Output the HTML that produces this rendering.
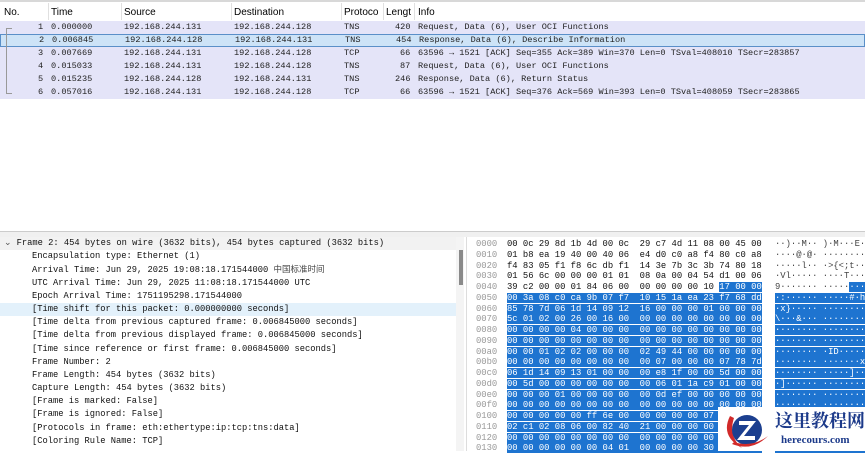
<!DOCTYPE html>
<html><head><meta charset="utf-8"><style>
body{margin:0;width:865px;height:451px;overflow:hidden;background:#fff;position:relative;font-family:"Liberation Mono",monospace;}
.a{position:absolute;white-space:pre;}
.h{font-family:"Liberation Sans",sans-serif;font-size:10px;color:#000;top:7px;}
.row{position:absolute;left:0;width:865px;height:13px;background:#e4e4f8;font-size:8.6px;line-height:13px;color:#222;}
.row span{position:absolute;white-space:pre;}
.det{position:absolute;left:0;top:237px;width:456px;font-size:8.75px;line-height:13.2px;color:#111;}
.det div{white-space:pre;padding-left:32px;height:13.2px;}
pre{margin:0;}
.hex{position:absolute;top:239px;font-size:8.85px;line-height:10.75px;color:#111;}
.b{background:#1e74d0;color:#fff;}
</style></head><body>
<div class="a" style="left:0;top:0;width:865px;height:2px;background:#d8d8d8"></div>
<div class="a h" style="left:4px">No.</div>
<div class="a h" style="left:51px">Time</div>
<div class="a h" style="left:124px">Source</div>
<div class="a h" style="left:234px">Destination</div>
<div class="a h" style="left:344px">Protoco</div>
<div class="a h" style="left:386px">Lengt</div>
<div class="a h" style="left:418px">Info</div>
<div class="a" style="left:48px;top:3px;width:1px;height:17px;background:#e0e0e0"></div>
<div class="a" style="left:121px;top:3px;width:1px;height:17px;background:#e0e0e0"></div>
<div class="a" style="left:231px;top:3px;width:1px;height:17px;background:#e0e0e0"></div>
<div class="a" style="left:341px;top:3px;width:1px;height:17px;background:#e0e0e0"></div>
<div class="a" style="left:383px;top:3px;width:1px;height:17px;background:#e0e0e0"></div>
<div class="a" style="left:414px;top:3px;width:1px;height:17px;background:#e0e0e0"></div>

<div class="row" style="top:21px"><span style="left:38px">1</span><span style="left:51px">0.000000</span><span style="left:124px">192.168.244.131</span><span style="left:234px">192.168.244.128</span><span style="left:344px">TNS</span><span style="left:395px">420</span><span style="left:418px">Request, Data (6), User OCI Functions</span></div>
<div class="row" style="top:34px;background:#cde3f7;border:1px solid #5a8fc8;box-sizing:border-box;line-height:11px"><span style="left:38px">2</span><span style="left:51px">0.006845</span><span style="left:124px">192.168.244.128</span><span style="left:234px">192.168.244.131</span><span style="left:344px">TNS</span><span style="left:395px">454</span><span style="left:418px">Response, Data (6), Describe Information</span></div>
<div class="row" style="top:47px"><span style="left:38px">3</span><span style="left:51px">0.007669</span><span style="left:124px">192.168.244.131</span><span style="left:234px">192.168.244.128</span><span style="left:344px">TCP</span><span style="left:400px">66</span><span style="left:418px">63596 → 1521 [ACK] Seq=355 Ack=389 Win=370 Len=0 TSval=408010 TSecr=283857</span></div>
<div class="row" style="top:60px"><span style="left:38px">4</span><span style="left:51px">0.015033</span><span style="left:124px">192.168.244.131</span><span style="left:234px">192.168.244.128</span><span style="left:344px">TNS</span><span style="left:400px">87</span><span style="left:418px">Request, Data (6), User OCI Functions</span></div>
<div class="row" style="top:73px"><span style="left:38px">5</span><span style="left:51px">0.015235</span><span style="left:124px">192.168.244.128</span><span style="left:234px">192.168.244.131</span><span style="left:344px">TNS</span><span style="left:395px">246</span><span style="left:418px">Response, Data (6), Return Status</span></div>
<div class="row" style="top:86px"><span style="left:38px">6</span><span style="left:51px">0.057016</span><span style="left:124px">192.168.244.131</span><span style="left:234px">192.168.244.128</span><span style="left:344px">TCP</span><span style="left:400px">66</span><span style="left:418px">63596 → 1521 [ACK] Seq=376 Ack=569 Win=393 Len=0 TSval=408059 TSecr=283865</span></div>
<div class="a" style="left:6px;top:28px;width:1px;height:66px;background:#999"></div>
<div class="a" style="left:6px;top:28px;width:6px;height:1px;background:#999"></div>
<div class="a" style="left:6px;top:93px;width:6px;height:1px;background:#999"></div>

<div class="a" style="left:0;top:231px;width:865px;height:5px;background:#f0f0f0;border-top:1px solid #ccc"></div>

<div class="det">
<div style="padding-left:4px;background:#f2f2f2"><span style="color:#555">⌄ </span>Frame 2: 454 bytes on wire (3632 bits), 454 bytes captured (3632 bits)</div>
<div>Encapsulation type: Ethernet (1)</div>
<div>Arrival Time: Jun 29, 2025 19:08:18.171544000 <span style="font-family:'Noto Sans CJK SC',sans-serif;font-size:8.5px;color:#444">中国标准时间</span></div>
<div>UTC Arrival Time: Jun 29, 2025 11:08:18.171544000 UTC</div>
<div>Epoch Arrival Time: 1751195298.171544000</div>
<div style="background:#e3f1fb">[Time shift for this packet: 0.000000000 seconds]</div>
<div>[Time delta from previous captured frame: 0.006845000 seconds]</div>
<div>[Time delta from previous displayed frame: 0.006845000 seconds]</div>
<div>[Time since reference or first frame: 0.006845000 seconds]</div>
<div>Frame Number: 2</div>
<div>Frame Length: 454 bytes (3632 bits)</div>
<div>Capture Length: 454 bytes (3632 bits)</div>
<div>[Frame is marked: False]</div>
<div>[Frame is ignored: False]</div>
<div>[Protocols in frame: eth:ethertype:ip:tcp:tns:data]</div>
<div>[Coloring Rule Name: TCP]</div>
</div>
<div class="a" style="left:456px;top:237px;width:8px;height:214px;background:#f4f4f4"></div>
<div class="a" style="left:459px;top:250px;width:4px;height:35px;background:#8a8a8a"></div>
<div class="a" style="left:466px;top:237px;width:1px;height:214px;background:#ddd"></div>

<pre class="hex" style="left:476px;color:#999">0000
0010
0020
0030
0040
0050
0060
0070
0080
0090
00a0
00b0
00c0
00d0
00e0
00f0
0100
0110
0120
0130</pre>
<pre class="hex" style="left:507px">00 0c 29 8d 1b 4d 00 0c  29 c7 4d 11 08 00 45 00
01 b8 ea 19 40 00 40 06  e4 d0 c0 a8 f4 80 c0 a8
f4 83 05 f1 f8 6c db f1  14 3e 7b 3c 3b 74 80 18
01 56 6c 00 00 00 01 01  08 0a 00 04 54 d1 00 06
39 c2 00 00 01 84 06 00  00 00 00 00 10 <span class="b">17 00 00</span>
<span class="b">00 3a 08 c0 ca 9b 07 f7  10 15 1a ea 23 f7 68 dd</span>
<span class="b">85 78 7d 06 1d 14 09 12  16 00 00 00 01 00 00 00</span>
<span class="b">5c 01 02 00 26 00 16 00  00 00 00 00 00 00 00 00</span>
<span class="b">00 00 00 00 04 00 00 00  00 00 00 00 00 00 00 00</span>
<span class="b">00 00 00 00 00 00 00 00  00 00 00 00 00 00 00 00</span>
<span class="b">00 00 01 02 02 00 00 00  02 49 44 00 00 00 00 00</span>
<span class="b">00 00 00 00 00 00 00 00  00 07 00 00 00 07 78 7d</span>
<span class="b">06 1d 14 09 13 01 00 00  00 e8 1f 00 00 5d 00 00</span>
<span class="b">00 5d 00 00 00 00 00 00  00 06 01 1a c9 01 00 00</span>
<span class="b">00 00 00 01 00 00 00 00  00 0d ef 00 00 00 00 00</span>
<span class="b">00 00 00 00 00 00 00 00  00 00 00 00 00 00 00 00</span>
<span class="b">00 00 00 00 00 ff 6e 00  00 00 00 00 07 06 00 00</span>
<span class="b">02 c1 02 08 06 00 82 40  21 00 00 00 00 00 00 00</span>
<span class="b">00 00 00 00 00 00 00 00  00 00 00 00 00 00 00 00</span>
<span class="b">00 00 00 00 00 00 04 01  00 00 00 00 30 00 00 00</span></pre>
<pre class="hex" style="left:775px;color:#444">··)··M·· )·M···E·
····@·@· ········
·····l·· ·>{&lt;;t··
·Vl····· ····T···
9······· ·····<span class="b">···</span>
<span class="b">·:······ ·····#·h·</span>
<span class="b">·x}····· ·········</span>
<span class="b">\···&amp;··· ·········</span>
<span class="b">········ ·········</span>
<span class="b">········ ·········</span>
<span class="b">········ ·ID······</span>
<span class="b">········ ·······x}</span>
<span class="b">········ ·····]···</span>
<span class="b">·]······ ·········</span>
<span class="b">········ ·········</span>
<span class="b">········ ·········</span>
<span class="b">········ ·········</span>
<span class="b">········ ·········</span>
<span class="b">········ ·········</span>
<span class="b">········ ·········</span></pre>

<div class="a" style="left:718px;top:407px;width:147px;height:44px;background:#fff"></div>
<svg class="a" style="left:722px;top:406px" width="50" height="45" viewBox="0 0 50 45">
<path d="M8 10 Q-2 30 20 42 Q6 30 12 12 Z" fill="#d12a2a"/>
<circle cx="25" cy="24" r="15" fill="#1c3f8f"/>
<path d="M17 15 H34 L22 30 H33 V34 H15 L27 19 H17 Z" fill="#fff"/>
<path d="M10 38 Q30 46 46 30 Q30 42 12 36 Z" fill="#d12a2a"/>
</svg>
<div class="a" style="left:775px;top:409px;font-family:'Noto Serif CJK SC',serif;font-weight:bold;font-size:18px;color:#1c3a8a;line-height:22px">这里教程网</div>
<div class="a" style="left:781px;top:434px;font-family:'Liberation Serif',serif;font-weight:bold;font-size:11px;color:#1c3a8a">herecours.com</div>
</body></html>
